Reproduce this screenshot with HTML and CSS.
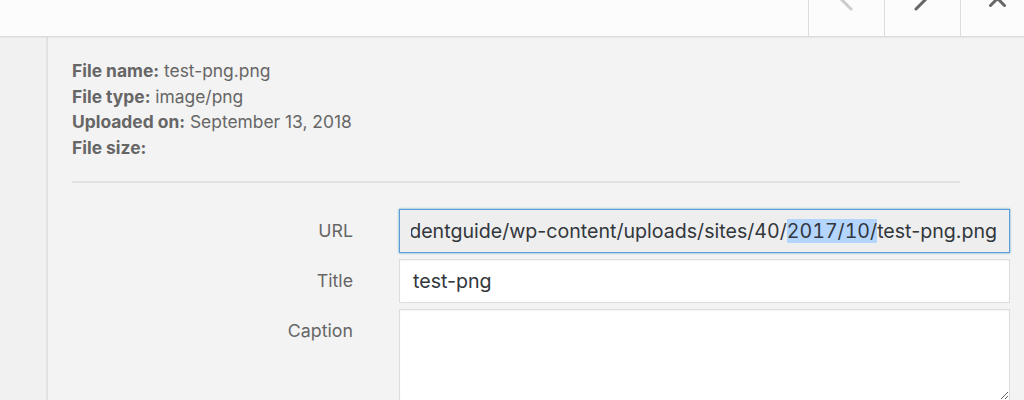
FILE: index.html
```html
<!DOCTYPE html>
<html>
<head>
<meta charset="utf-8">
<link rel="stylesheet" href="styles.css">
</head>
<body>
<div class="header">
  <button class="nav-btn prev" aria-label="Previous">
    <svg width="75" height="36" viewBox="0 0 75 36"><path d="M42 9 L29 -4" /></svg>
  </button>
  <button class="nav-btn next" aria-label="Next">
    <svg width="75" height="36" viewBox="0 0 75 36"><path d="M31 9 L44 -4" /></svg>
  </button>
  <button class="nav-btn close" aria-label="Close">
    <svg width="63" height="36" viewBox="0 0 63 36"><path d="M29.5 5.5 L36.5 -1.5 L43.5 5.5" /></svg>
  </button>
</div>
<div class="body">
  <aside class="side"></aside>
  <main class="details">
    <div class="info">
      <div class="line"><strong>File name:</strong> test-png.png</div>
      <div class="line"><strong>File type:</strong> image/png</div>
      <div class="line"><strong>Uploaded on:</strong> September 13, 2018</div>
      <div class="line"><strong>File size:</strong></div>
    </div>
    <div class="form">
      <div class="row">
        <label class="label">URL</label>
        <div class="field url-field"><div class="url-clip"><span>https://blogs.example.edu/studentguide/wp-content/uploads/sites/<span class="num">40</span>/<mark class="sel num">2017/10/</mark>test-png.png</span></div></div>
      </div>
      <div class="row">
        <label class="label">Title</label>
        <div class="field title-field">test-png</div>
      </div>
      <div class="row">
        <label class="label">Caption</label>
        <textarea class="field caption-field"></textarea>
      </div>
    </div>
  </main>
</div>
</body>
</html>
```

FILE: styles.css
```css
* { box-sizing: border-box; }
html, body { margin: 0; height: 100%; }
body {
  width: 1024px;
  height: 400px;
  overflow: hidden;
  background: #f3f3f3;
  font-family: Inter, "Liberation Sans", sans-serif;
  color: #666;
}
.header {
  height: 37px;
  background: #fcfcfc;
  border-bottom: 1px solid #dcdcdc;
  display: flex;
  justify-content: flex-end;
  box-shadow: 0 1px 1px rgba(0,0,0,0.04);
  position: relative;
}
.nav-btn {
  width: 76px;
  height: 36px;
  padding: 0;
  margin: 0;
  border: 0;
  border-left: 1px solid #dcdcdc;
  background: transparent;
  display: block;
}
.nav-btn.close { width: 64px; }
.nav-btn svg { display: block; }
.nav-btn path {
  fill: none;
  stroke-width: 3;
  stroke-linecap: round;
  stroke-linejoin: round;
}
.prev path { stroke: #cccccc; }
.next path, .close path { stroke: #666; }
.body {
  display: flex;
  height: 363px;
}
.side {
  width: 48px;
  flex: none;
  background: #f1f1f1;
  border-right: 2px solid #e2e2e2;
}
.details {
  flex: 1;
  min-width: 0;
  padding: 21px 14px 0 24px;
}
.info {
  margin-right: 50px;
  padding-bottom: 20px;
  border-bottom: 2px solid #e2e2e2;
}
.line {
  font-size: 17.4px;
  line-height: 25.7px;
  color: #666;
}
.line strong { font-weight: 700; }
.form {
  padding-top: 26px;
  display: flex;
  flex-direction: column;
  gap: 6px;
}
.row {
  display: flex;
  align-items: flex-start;
}
.label {
  width: 281px;
  flex: none;
  text-align: right;
  font-size: 17.8px;
  color: #666;
  padding-top: 11px;
  margin-right: 46px;
}
.field {
  flex: 1;
  min-width: 0;
  height: 44px;
  border: 1px solid #dddddd;
  background: #fff;
  font-family: Inter, "Liberation Sans", sans-serif;
  font-size: 19.6px;
  color: #32373c;
  box-shadow: inset 0 1px 2px rgba(0,0,0,0.04);
}
.url-field {
  background: #eeeeee;
  border-color: #5b9dd9;
  box-shadow: 0 0 2px rgba(30,140,190,0.8);
  padding: 0 12px 0 11px;
  display: flex;
}
.url-clip {
  flex: 1;
  min-width: 0;
  overflow: hidden;
  display: flex;
  justify-content: flex-end;
  align-items: center;
  white-space: nowrap;
}
.url-clip > span { flex: none; }
.num { font-variant-numeric: tabular-nums; }
.sel {
  background: #b4d5fe;
  color: inherit;
}
.title-field {
  padding: 0 13px;
  display: flex;
  align-items: center;
}
.caption-field {
  height: 92px;
  resize: vertical;
  display: block;
  outline: none;
  padding: 8px 13px;
}
```
